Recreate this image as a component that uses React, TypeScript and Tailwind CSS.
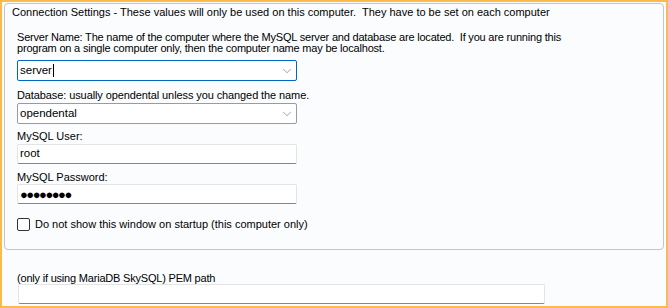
import { ChevronDown } from "lucide-react";

const font = "font-['Liberation_Sans',Arial,sans-serif]";

function Combo({ value, focused }: { value: string; focused?: boolean }) {
  return (
    <div
      className={[
        "flex h-[21px] w-[280px] items-center justify-between rounded-[2px] border bg-white pl-[2px] pr-[2px]",
        focused ? "border-[#0067c0]" : "border-[#9b9b9b]",
      ].join(" ")}
    >
      <span className="flex items-center text-[11.5px] leading-none text-black">
        {value}
        {focused && <span className="ml-[1px] inline-block h-[13px] w-px bg-black" />}
      </span>
      <ChevronDown className="h-[14px] w-[14px] text-[#606060]" strokeWidth={1} />
    </div>
  );
}

function TextBox({ children, width = "w-[280px]" }: { children?: React.ReactNode; width?: string }) {
  return (
    <div
      className={`flex h-[20px] ${width} items-center rounded-[2px] border border-[#e4e4e4] border-b-[#868686] bg-white pl-[2px] text-[11.5px] leading-none text-black`}
    >
      {children}
    </div>
  );
}

export default function App() {
  return (
    <div className={`h-[308px] w-[668px] border-2 border-[#fcb94c] bg-[#fbfcfe] ${font} text-[11px] text-black`}>
      {/* Connection group */}
      <div className="ml-[2px] mt-[1px] h-[247px] w-[660px] rounded-[4px] border border-[#c4c4c4] pl-[12px]">
        <div className="-ml-[5px] mt-[2px] leading-[13px]">
          Connection Settings - These values will only be used on this computer.&nbsp; They have to be set on each computer
        </div>

        <div className="mt-[13px] leading-[11px] tracking-[-0.2px]">
          Server Name: The name of the computer where the MySQL server and database are located.&nbsp; If you are running this
          <br />
          program on a single computer only, then the computer name may be localhost.
        </div>
        <div className="mt-[6px]">
          <Combo value="server" focused />
        </div>

        <div className="mt-[8px] leading-[13px] tracking-[-0.1px]">Database: usually opendental unless you changed the name.</div>
        <div className="mt-[1px]">
          <Combo value="opendental" />
        </div>

        <div className="mt-[6px] leading-[13px]">MySQL User:</div>
        <div className="mt-[1px]">
          <TextBox>root</TextBox>
        </div>

        <div className="mt-[7px] leading-[13px]">MySQL Password:</div>
        <div className="mt-[0px]">
          <TextBox>
            <span className="text-[13px] tracking-[-1.5px]">●●●●●●●●</span>
          </TextBox>
        </div>

        <div className="mt-[14px] flex items-center gap-[5px]">
          <div className="h-[13px] w-[13px] rounded-[2px] border border-[#333] bg-white" />
          <span className="leading-[13px]">Do not show this window on startup (this computer only)</span>
        </div>
      </div>

      {/* PEM path */}
      <div className="ml-[15px] mt-[22px] leading-[13px] tracking-[-0.2px]">(only if using MariaDB SkySQL) PEM path</div>
      <div className="ml-[16px] mt-[-1px]">
        <TextBox width="w-[527px]" />
      </div>
    </div>
  );
}
